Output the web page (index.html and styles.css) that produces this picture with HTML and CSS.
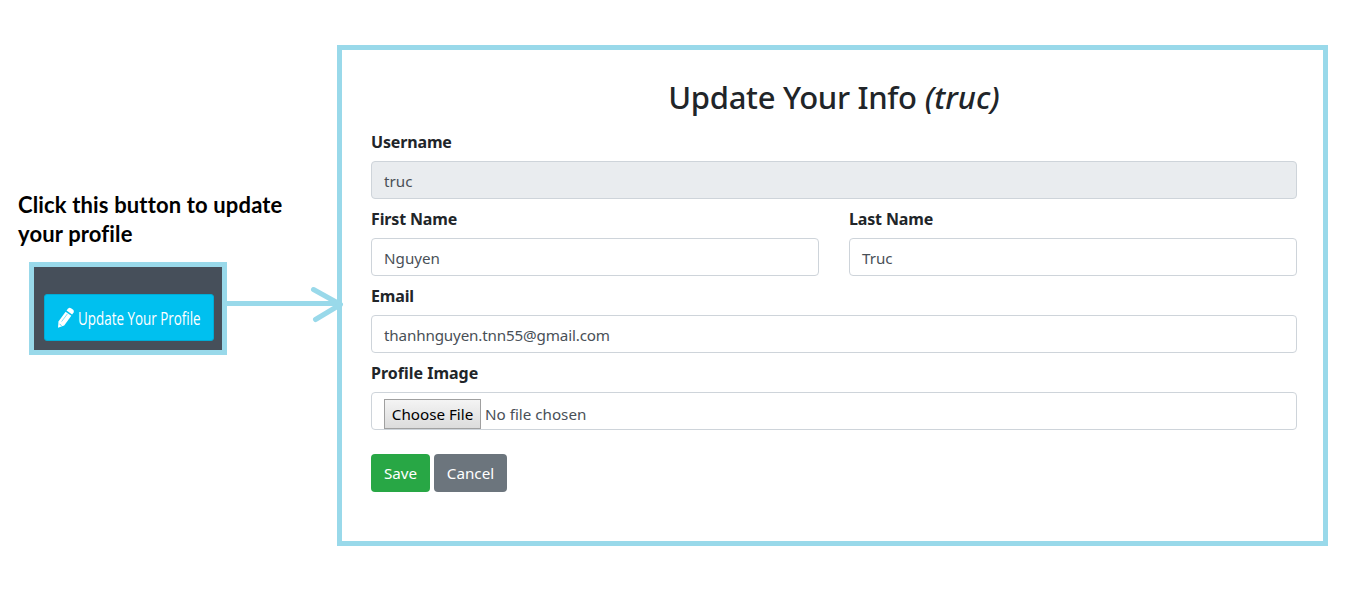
FILE: index.html
```html
<!DOCTYPE html>
<html lang="en">
<head>
<meta charset="utf-8">
<title>Update Your Info</title>
<link rel="stylesheet" href="styles.css">
</head>
<body>
<div class="page">
  <aside class="guide">
    <p class="note">Click this button to update<br>your profile</p>
    <div class="callout">
      <div class="snippet">
        <button class="profile-btn" type="button">
          <svg class="pencil" width="18" height="22" viewBox="0 0 18 22"><path d="M1 20.8 L1.5 14.5 L8.6 4.8 L14.3 8.8 L7.2 18.6 Z" fill="#fff"/><path d="M9.5 3.6 L11.2 1.4 Q12.4 .2 14 1.2 L16.2 2.8 Q17.4 4 16.6 5.4 L15.1 7.5 Z" fill="#fff"/><path d="M4.6 14.6 L10.4 6.9" stroke="#00c0ef" stroke-width=".5" fill="none"/><path d="M2.6 17.2 L4.6 18.6" stroke="#00c0ef" stroke-width=".7"/></svg>
          <span class="profile-text">Update Your Profile</span>
        </button>
      </div>
      <svg class="arrow" width="118" height="40" viewBox="0 0 118 40"><path d="M0 20.5 H112" stroke-width="5"/><path d="M86.5 6.5 L113.5 21.5 L88.5 36.5" stroke-width="5" stroke-linecap="round" stroke-linejoin="round"/></svg>
    </div>
  </aside>
  <main class="card">
    <h2 class="title"><span class="title-main">Update Your Info</span> <em>(truc)</em></h2>
    <div class="field">
      <div class="label">Username</div>
      <div class="control readonly">truc</div>
    </div>
    <div class="row">
      <div class="field">
        <div class="label">First Name</div>
        <div class="control">Nguyen</div>
      </div>
      <div class="field">
        <div class="label">Last Name</div>
        <div class="control">Truc</div>
      </div>
    </div>
    <div class="field">
      <div class="label">Email</div>
      <div class="control email">thanhnguyen.tnn55@gmail.com</div>
    </div>
    <div class="field">
      <div class="label image">Profile Image</div>
      <div class="control file"><span class="choose">Choose File</span><span class="chosen">No file chosen</span></div>
    </div>
    <div class="actions">
      <button class="btn save" type="button">Save</button>
      <button class="btn cancel" type="button">Cancel</button>
    </div>
  </main>
</div>
</body>
</html>
```
FILE: styles.css
```css
* { box-sizing: border-box; }
body {
  margin: 0;
  background: #fff;
  color: #212529;
  font: 16px/24px "Noto Sans", "Open Sans", sans-serif;
}
.page {
  display: grid;
  grid-template-columns: 337px 991px;
  height: 606px;
  padding-top: 45px;
  overflow: hidden;
}
.guide { padding-top: 145px; }
.note {
  margin: 0 0 14px 18px;
  height: 58px;
  color: #000;
  font: bold 22px/29px Lato, sans-serif;
  letter-spacing: .15px;
  font-variant-ligatures: none;
  white-space: nowrap;
}
.callout { display: flex; margin-left: 29px; }
.snippet {
  flex: none;
  width: 198px;
  height: 93px;
  padding: 27px 8px 0 10px;
  border: 5px solid #99d9ea;
  background: #464f5a;
}
.profile-btn {
  display: flex;
  align-items: center;
  width: 170px;
  height: 47px;
  padding: 0 0 0 12px;
  border: 1px solid #00acd6;
  border-radius: 3px;
  background: #00c0ef;
  color: #fff;
}
.pencil { flex: none; }
.profile-text {
  margin-left: 3px;
  font: 18px/24px "Open Sans", sans-serif;
  white-space: nowrap;
  transform: scaleX(.745);
  transform-origin: left;
}
.arrow {
  position: relative;
  z-index: 1;
  flex: none;
  margin-top: 21px;
  fill: none;
  stroke: #99d9ea;
}
.card {
  height: 501px;
  padding: 28px 26px 0 29px;
  border: 5px solid #99d9ea;
}
.title {
  margin: 0 0 8px;
  height: 38px;
  font-size: 31px;
  font-weight: 500;
  line-height: 38px;
  text-align: center;
  white-space: nowrap;
}
.title-main { letter-spacing: -.3px; }
.row { display: grid; grid-template-columns: 1fr 1fr; gap: 30px; }
.field { height: 77px; padding-top: 6px; }
.label { height: 24px; margin-bottom: 7px; font-weight: bold; letter-spacing: -.15px; }
.image { letter-spacing: 0; }
.control {
  height: 38px;
  padding: 7px 12px;
  border: 1px solid #ced4da;
  border-radius: 4px;
  background: #fff;
  color: #495057;
  font-size: 15.2px;
  white-space: nowrap;
}
.email { letter-spacing: -.15px; }
.readonly { background: #e9ecef; }
.file { display: flex; padding: 6px 12px 0; }
.choose {
  width: 97px;
  height: 30px;
  border: 1px solid #a0a0a0;
  background: linear-gradient(#f4f4f4, #dcdcdc);
  color: #000;
  line-height: 28px;
  text-align: center;
}
.chosen { margin-left: 4px; line-height: 30px; }
.actions { display: flex; gap: 4px; margin-top: 22px; }
.btn {
  height: 38px;
  padding: 0;
  border: 0;
  border-radius: 4px;
  color: #fff;
  font: inherit;
  font-size: 15.2px;
}
.save { width: 59px; background: #28a745; }
.cancel { width: 73px; background: #6c757d; }
```
